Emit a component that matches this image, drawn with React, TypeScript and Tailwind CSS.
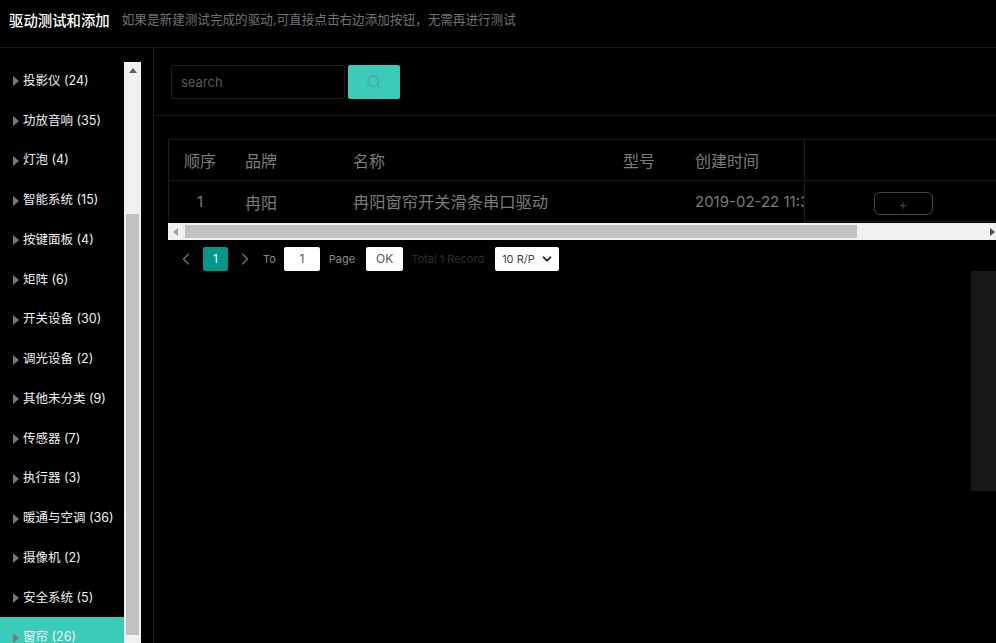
import { ChevronDown, ChevronLeft, ChevronRight, Search } from 'lucide-react';

const categories = [
	'投影仪 (24)',
	'功放音响 (35)',
	'灯泡 (4)',
	'智能系统 (15)',
	'按键面板 (4)',
	'矩阵 (6)',
	'开关设备 (30)',
	'调光设备 (2)',
	'其他未分类 (9)',
	'传感器 (7)',
	'执行器 (3)',
	'暖通与空调 (36)',
	'摄像机 (2)',
	'安全系统 (5)',
	'窗帘 (26)',
];

const font = 'font-["Inter","Noto_Sans_CJK_SC",sans-serif]';

const Sidebar = () => (
	<div className="relative w-[154px] shrink-0 border-r border-[#1c1c1c] overflow-hidden">
		<div className="w-[124px] pt-[12.4px]">
			{categories.map((name, i) => (
				<div
					key={name}
					className={`flex items-center h-[39.75px] pl-[13px] pt-[2px] whitespace-nowrap overflow-hidden text-[12.5px] text-[#f0f0f0] ${
						i === categories.length - 1 ? 'bg-[#3bcbb9]' : ''
					}`}
				>
					<span className="mr-[4px] border-y-[5px] border-l-[6px] border-y-transparent border-l-[#777]" />
					{name}
				</div>
			))}
		</div>
		{/* sidebar scrollbar */}
		<div className="absolute left-[124px] top-[14px] bottom-0 w-[17px] bg-[#f1f1f1]">
			<div className="mx-auto mt-[6px] w-0 border-x-[4px] border-b-[5px] border-x-transparent border-b-[#606060]" />
			<div className="absolute left-[2px] right-[2px] top-[152px] h-[421px] bg-[#c1c1c1]" />
		</div>
	</div>
);

const Pagination = () => (
	<div className="flex items-center h-[24px] mt-[7px] pl-[14px] text-[11px] text-[#8a8a8a]">
		<ChevronLeft size={20} strokeWidth={1.4} className="ml-[8px] text-[#777]" />
		<span className="flex items-center justify-center w-[25px] h-[24px] ml-[7px] rounded-[2px] bg-[#009688] text-white text-[12px]">
			1
		</span>
		<ChevronRight size={20} strokeWidth={1.4} className="ml-[7px] text-[#777]" />
		<span className="ml-[8px]">To</span>
		<span className="flex items-center justify-center w-[36px] h-[24px] ml-[8px] rounded-[2px] bg-white text-[#555] text-[12px]">
			1
		</span>
		<span className="ml-[9px]">Page</span>
		<span className="flex items-center justify-center w-[37px] h-[24px] ml-[11px] rounded-[2px] bg-white text-[#555] text-[12px]">
			OK
		</span>
		<span className="ml-[8px] text-[#2e2e2e]">Total 1 Record</span>
		<span className="flex items-center justify-between w-[64px] h-[24px] ml-[11px] pl-[7px] pr-[5px] rounded-[2px] bg-white text-[#444]">
			10 R/P
			<ChevronDown size={14} strokeWidth={3} className="text-[#111]" />
		</span>
	</div>
);

const DriverTable = () => (
	<div className="relative mt-[23px] ml-[14px] text-[16px] text-[#7b7b7b]">
		<div className="border-l border-t border-[#1c1c1c]">
			<div className="flex items-center h-[41px] pt-[1px] border-b border-[#1c1c1c] whitespace-nowrap">
				<span className="w-[76px] pl-[15px]">顺序</span>
				<span className="w-[108px]">品牌</span>
				<span className="w-[270px]">名称</span>
				<span className="w-[72px]">型号</span>
				<span>创建时间</span>
			</div>
			<div className="flex items-center h-[42px] pt-[1px] whitespace-nowrap overflow-hidden">
				<span className="w-[76px] pl-[28px] text-[15px]">1</span>
				<span className="w-[108px]">冉阳</span>
				<span className="w-[270px] text-[16.25px]">冉阳窗帘开关滑条串口驱动</span>
				<span className="w-[72px]" />
				<span className="text-[15px]">2019-02-22 11:30:12</span>
			</div>
		</div>
		{/* fixed action column */}
		<div className="absolute left-[636px] top-0 right-0 h-[83px] bg-black border-l border-t border-b border-[#1c1c1c]">
			<div className="h-[41px] border-b border-[#1c1c1c]" />
			<div className="flex justify-center w-[196px] pt-[11px]">
				<span className="flex items-center justify-center w-[59px] h-[23px] rounded-[6px] border border-[#444] text-[#444] text-[14px]">
					+
				</span>
			</div>
		</div>
		{/* table scrollbar */}
		<div className="relative h-[17px] bg-[#f1f1f1]">
			<span className="absolute left-[5px] top-[5px] border-y-[4px] border-r-[5px] border-y-transparent border-r-[#a3a3a3]" />
			<div className="absolute left-[17px] top-[2px] w-[672px] h-[13px] bg-[#c1c1c1]" />
			<span className="absolute right-[1px] top-[5px] border-y-[4px] border-l-[5px] border-y-transparent border-l-[#505050]" />
		</div>
	</div>
);

const App = () => (
	<div className={`relative flex flex-col w-[996px] h-[643px] overflow-hidden bg-black ${font}`}>
		<div className="flex items-center h-[48px] shrink-0 pl-[9px] pb-[6px] border-b border-[#1c1c1c] whitespace-nowrap">
			<span className="text-[14.4px] font-medium text-white">驱动测试和添加</span>
			<span className="ml-[12px] text-[12.6px] text-[#6f7478]">如果是新建测试完成的驱动,可直接点击右边添加按钮，无需再进行测试</span>
		</div>
		<div className="flex flex-1 min-h-0">
			<Sidebar />
			<div className="flex-1 min-w-0">
				<div className="flex items-center h-[68px] pl-[17px] border-b border-[#1c1c1c]">
					<div className="flex items-center w-[174px] h-[34px] pl-[9px] pt-[2px] rounded-[2px] border border-[#1c1c1c] text-[13px] text-[#5a5a5a]">
						search
					</div>
					<div className="flex items-center justify-center w-[52px] h-[34px] ml-[3px] rounded-[2px] bg-[#3bcbb9]">
						<Search size={16} strokeWidth={2} className="text-[#5f9f98]" />
					</div>
				</div>
				<DriverTable />
				<Pagination />
			</div>
		</div>
		{/* dark panel edge over the right side */}
		<div className="absolute right-0 top-[271px] w-[25px] h-[220px] bg-[#181818]" />
	</div>
);

export default App;
